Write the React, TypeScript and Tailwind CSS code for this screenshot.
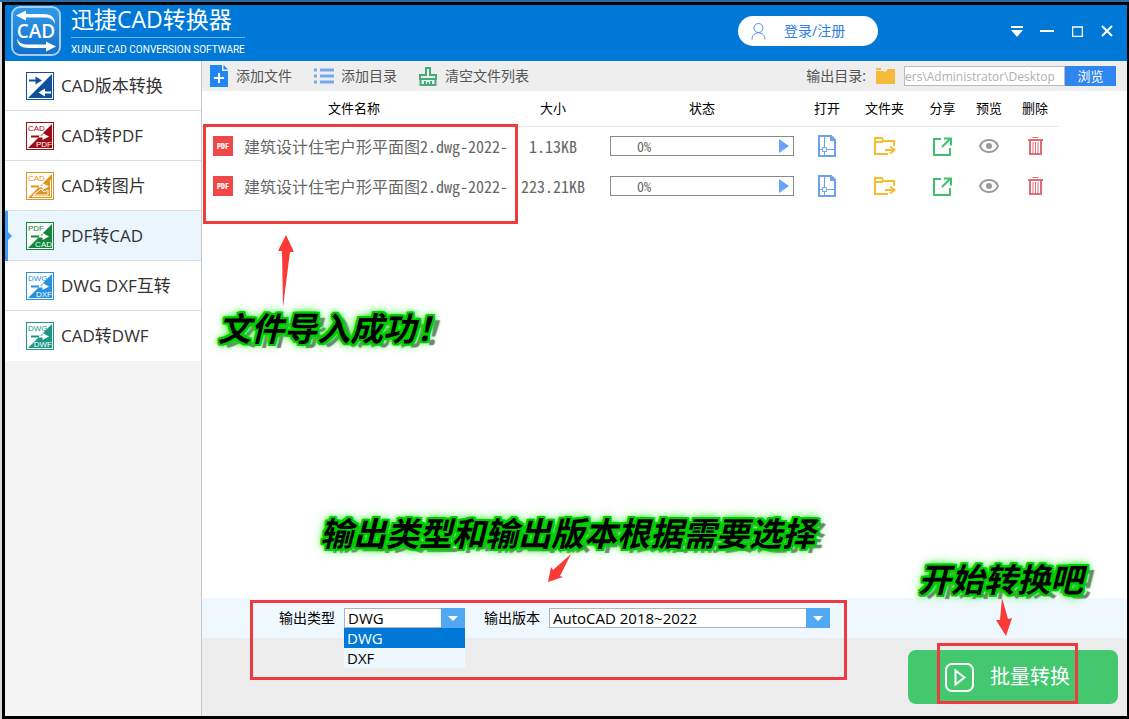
import { ReactNode } from "react";
import clsx from "clsx";

type Tool = {
  label: string;
  color: string;
  from?: string;
  to?: string;
  active?: boolean;
};

const tools: Tool[] = [
  { label: "CAD版本转换", color: "#10509a" },
  { label: "CAD转PDF", color: "#9c0c14", from: "CAD", to: "PDF" },
  { label: "CAD转图片", color: "#dd951f", from: "CAD" },
  { label: "PDF转CAD", color: "#12873a", from: "PDF", to: "CAD", active: true },
  { label: "DWG DXF互转", color: "#2a8fdc", from: "DWG", to: "DXF" },
  { label: "CAD转DWF", color: "#1d9688", from: "DWG", to: "DWF" },
];

const files = [
  { id: 1, name: "建筑设计住宅户形平面图2.dwg-2022-", size: "1.13KB", progress: 0 },
  { id: 2, name: "建筑设计住宅户形平面图2.dwg-2022-", size: "223.21KB", progress: 0 },
];

const columns = [
  { label: "文件名称", width: "w-[304px]" },
  { label: "大小", width: "w-[94px]" },
  { label: "状态", width: "w-[204px]" },
  { label: "打开", width: "w-[46px]" },
  { label: "文件夹", width: "w-[69px]" },
  { label: "分享", width: "w-[47px]" },
  { label: "预览", width: "w-[46px]" },
  { label: "删除", width: "w-[46px]" },
];

const Logo = () => (
  <svg width="50" height="50" viewBox="0 0 50 50" className="shrink-0">
    <defs>
      <linearGradient id="logo-bg" x1="0" y1="0" x2="0" y2="1">
        <stop offset="0" stopColor="#2f9bea" />
        <stop offset="1" stopColor="#1470cc" />
      </linearGradient>
    </defs>
    <rect x="1" y="1" width="48" height="48" rx="8" fill="url(#logo-bg)" stroke="#a9cdec" strokeWidth="2" />
    <path d="M5 9.500 15 4.500v3.500h17c8 0 12 3 12 10-2-5-5-6.500-12-6.500H15v3z" fill="#fff" />
    <path d="M45 40.500 35 45.500V42H18c-8 0-12-3-12-10 2 5 5 6.500 12 6.500h17v-3z" fill="#fff" />
    <text x="25" y="32" textAnchor="middle" fontSize="19" fontWeight="600" fill="#fff">
      CAD
    </text>
  </svg>
);

const ToolIcon = ({ color, from, to }: Tool) => (
  <svg width="28" height="28" viewBox="0 0 28 28" className="shrink-0" fontFamily="Liberation Sans">
    <rect x="0.5" y="0.5" width="27" height="27" fill="#fff" stroke={color} />
    <path d="M26 2v24H2z" fill={color} />
    {from ? (
      <>
        <text x="2" y="9" fontSize="8" fill={color}>
          {from}
        </text>
        <path d="M5 14.500h9" stroke={color} strokeWidth="2" />
        <path d="M13 14.500h6" stroke="#fff" strokeWidth="2" />
        <path d="M16.500 11v7l6.500-3.500z" fill="#fff" />
      </>
    ) : (
      <>
        <path d="M3 8.500h8" stroke={color} strokeWidth="2" />
        <path d="M9.500 4.500v8l6.500-4z" fill={color} />
        <path d="M17 20.500h8" stroke="#fff" strokeWidth="2" />
        <path d="M19 16.500v8l-6.500-4z" fill="#fff" />
      </>
    )}
    {to && (
      <text x="26" y="25" textAnchor="end" fontSize="8" fill="#fff">
        {to}
      </text>
    )}
    {from && !to && (
      <>
        <path d="M6 24.500h18.500V8" fill="none" stroke="#fff" />
        <path d="M7 23l8-6 3 3 4-2v5z" fill={color} stroke="#fff" />
      </>
    )}
  </svg>
);

const AddFileIcon = () => (
  <svg width="18" height="22" viewBox="0 0 18 22">
    <path d="M0 0h12v6h6v16H0z" fill="#1f86f5" />
    <path d="M13.500 0 18 4.500h-4.500z" fill="#1f86f5" />
    <path d="M9 8v10M4 13h10" stroke="#fff" strokeWidth="2" />
  </svg>
);

const ListIcon = () => (
  <svg width="20" height="16" viewBox="0 0 20 16" stroke="#74a9f0" strokeWidth="3">
    <path d="M0 2h3M0 8h3M0 14h3M6 2h14M6 8h14M6 14h14" />
  </svg>
);

const BroomIcon = () => (
  <svg width="18" height="19" viewBox="0 0 18 19" fill="none" stroke="#45ab78" strokeWidth="2">
    <path d="M7 8V1h4v7h6v4H1V8zM1.500 12v6h15v-6M6 14v4M9 15v3M12 14v4" />
  </svg>
);

const FolderIcon = () => (
  <svg width="19" height="16" viewBox="0 0 19 16" fill="#f6b93b">
    <path d="M0 3h7l2 1 3-3h7v15H0zM0 0h5v2H0z" />
  </svg>
);

const PdfIcon = () => (
  <svg width="20" height="20" viewBox="0 0 20 20" className="shrink-0">
    <rect width="20" height="20" fill="#f04848" />
    <text x="10" y="13" textAnchor="middle" fontSize="8" fontWeight="600" fill="#fff">
      PDF
    </text>
  </svg>
);

const OpenIcon = () => (
  <svg width="18" height="22" viewBox="0 0 18 22" fill="none" stroke="#6ba3ee">
    <path d="M1 1h12l4 4v16H1z" strokeWidth="2" />
    <path d="M12 0h1l5 5v1h-6z" fill="#6ba3ee" stroke="none" />
    <path d="M6.500 2v10M6.500 17v3M2 14.500h2M9 14.500h7M4.500 12.500h4v4h-4z" />
  </svg>
);

const MoveIcon = () => (
  <svg width="22" height="18" viewBox="0 0 22 18" fill="none" stroke="#f7bd2c" strokeWidth="2">
    <path d="M14 17H1V1h7l1 3h11v5M1 5h8M11 13h9M16 9.500l4.500 3.500-4.500 3.500" />
  </svg>
);

const ShareIcon = () => (
  <svg width="19" height="19" viewBox="0 0 19 19" fill="none" stroke="#3fc06c" strokeWidth="2">
    <path d="M8 2H1v16h16v-7M9 10l8.500-8.500M11 1.500h7v7" />
  </svg>
);

const EyeIcon = () => (
  <svg width="20" height="14" viewBox="0 0 20 14" fill="none" stroke="#999" strokeWidth="2">
    <path d="M1 7c3-8 15-8 18 0-3 8-15 8-18 0z" />
    <circle cx="10" cy="7" r="3" fill="#999" stroke="none" />
  </svg>
);

const TrashIcon = () => (
  <svg width="15" height="18" viewBox="0 0 15 18" fill="none" stroke="#de6f78">
    <path d="M0 3h15M2 3v14h11V3" strokeWidth="2" />
    <path d="M4.500 .5h6M5 5v11M7.500 5v11M10 5v11" />
  </svg>
);

const actions = [
  { label: "打开", icon: <OpenIcon /> },
  { label: "文件夹", icon: <MoveIcon /> },
  { label: "分享", icon: <ShareIcon /> },
  { label: "预览", icon: <EyeIcon /> },
  { label: "删除", icon: <TrashIcon /> },
];

const Callout = ({ className, children }: { className: string; children: ReactNode }) => (
  <p
    className={clsx(
      "pointer-events-none absolute z-20 whitespace-nowrap text-[33px] font-bold italic leading-10 text-black",
      "[text-shadow:2px_0_#0c0,-2px_0_#0c0,0_2px_#0c0,0_-2px_#0c0,2px_2px_#0c0,-2px_2px_#0c0,2px_-2px_#0c0,-2px_-2px_#0c0,0_0_5px_#0d0,0_0_8px_#0e0,0_0_12px_#3e3,7px_4px_1px_#777]",
      className
    )}
  >
    {children}
  </p>
);

const Marker = ({ className }: { className: string }) => (
  <div className={clsx("pointer-events-none absolute z-10 border-3 border-[#ec3c3f]", className)} />
);

const Header = () => (
  <header className="flex h-14 items-center bg-[#0078d7] pb-1 pl-1.5 pr-[5px] text-white">
    <Logo />
    <div className="ml-2.5 flex flex-col">
      <h1 className="border-b border-[#6db3ec] pb-1 text-[23px] leading-7">迅捷CAD转换器</h1>
      <span className="pt-1 font-['Roboto',sans-serif] text-[10px] leading-4">XUNJIE CAD CONVERSION SOFTWARE</span>
    </div>
    <button className="ml-auto mr-[124px] flex h-[30px] w-[140px] items-center gap-4 rounded-full bg-white pl-[13px] text-sm text-[#2f7de6]">
      <svg width="15" height="17" viewBox="0 0 15 17" fill="none" stroke="#4a8cf0">
        <circle cx="7.500" cy="5" r="4.500" />
        <path d="M1 16.500c0-9 13-9 13 0" />
      </svg>
      <span className="pl-0.5">登录/注册</span>
    </button>
    <div className="flex">
      <button aria-label="菜单" className="flex h-8 w-[30px] items-center justify-center">
        <svg width="12" height="11" viewBox="0 0 12 11" fill="#fff">
          <path d="M0 0h12v2H0zM0 4h12l-6 7z" />
        </svg>
      </button>
      <button aria-label="最小化" className="flex h-8 w-[30px] items-center justify-center">
        <svg width="14" height="2" viewBox="0 0 14 2" fill="#fff">
          <path d="M0 0h14v2H0z" />
        </svg>
      </button>
      <button aria-label="最大化" className="flex h-8 w-[30px] items-center justify-center">
        <svg width="11" height="11" viewBox="0 0 11 11" fill="none" stroke="#fff">
          <path d="M.5 1h10v9.500H.5z" strokeWidth="1.500" />
        </svg>
      </button>
      <button aria-label="关闭" className="flex h-8 w-[30px] items-center justify-center">
        <svg width="12" height="12" viewBox="0 0 12 12" stroke="#fff" strokeWidth="2">
          <path d="M1 1l10 10M11 1L1 11" />
        </svg>
      </button>
    </div>
  </header>
);

const Sidebar = () => (
  <nav className="w-[197px] shrink-0 border-r border-[#c3c9d0] bg-[#f4f4f4]">
    {tools.map((tool) => (
      <a
        key={tool.label}
        href="#"
        className={clsx(
          "relative flex h-[50px] items-center gap-[7px] border-b border-[#dcdfe3] pl-[21px] text-[17px] text-[#333] last:border-white",
          tool.active ? "bg-[#eaf5fe]" : "bg-white"
        )}
      >
        {tool.active && (
          <svg width="7" height="50" viewBox="0 0 7 50" fill="#3d9df6" className="absolute left-0 top-0">
            <path d="M0 0h3v21l4 4-4 4v21H0z" />
          </svg>
        )}
        <ToolIcon {...tool} />
        <span>{tool.label}</span>
      </a>
    ))}
  </nav>
);

const Toolbar = () => (
  <div className="flex h-[30px] items-center bg-[#eee] pl-2 pr-[11px] text-sm text-[#555]">
    <button className="flex items-center gap-2">
      <AddFileIcon />
      添加文件
    </button>
    <button className="ml-[22px] flex items-center gap-[7px]">
      <ListIcon />
      添加目录
    </button>
    <button className="ml-[22px] flex items-center gap-2">
      <BroomIcon />
      清空文件列表
    </button>
    <label htmlFor="output-dir" className="ml-auto mr-2.5">
      输出目录:
    </label>
    <FolderIcon />
    <input
      id="output-dir"
      readOnly
      value="ers\Administrator\Desktop"
      className="ml-[9px] h-5 w-[161px] border border-[#bbb] bg-white text-xs text-[#b0b0b0] outline-none"
    />
    <button className="h-5 w-[51px] bg-[#2f86f0] text-[13px] leading-5 text-white">浏览</button>
  </div>
);

const FileTable = () => (
  <table className="w-[856px] table-fixed border-collapse">
    <thead>
      <tr className="h-[35px] border-b border-[#e6e6e6]">
        {columns.map((column) => (
          <th key={column.label} className={clsx("p-0 text-[13px] font-normal text-black", column.width)}>
            {column.label}
          </th>
        ))}
      </tr>
    </thead>
    {/* half-width latin keeps names and sizes in fixed columns */}
    <tbody className="font-['Noto_Sans_CJK_SC',sans-serif] [font-feature-settings:'hwid']">
      {files.map((file) => (
        <tr key={file.id} className="h-10 text-[#666]">
          <td className="p-0">
            <div className="flex items-center gap-[11px] whitespace-nowrap pl-[11px]">
              <PdfIcon />
              <span className="text-base">{file.name}</span>
            </div>
          </td>
          <td className="p-0 text-center text-base">{file.size}</td>
          <td className="p-0">
            <div className="mx-auto flex h-5 w-[184px] items-center justify-between border border-[#8a8a8a] pl-[26px] pr-1 text-sm">
              {file.progress}%
              <svg width="10" height="14" viewBox="0 0 10 14" fill="#68a4f6">
                <path d="M0 0v14l10-7z" />
              </svg>
            </div>
          </td>
          {actions.map((action) => (
            <td key={action.label} className="p-0">
              <button aria-label={action.label} className="mx-auto flex">
                {action.icon}
              </button>
            </td>
          ))}
        </tr>
      ))}
    </tbody>
  </table>
);

const DropArrow = () => (
  <span className="pointer-events-none absolute right-0 top-0 flex h-5 w-6 items-center justify-center bg-[#51a9f4]">
    <svg width="10" height="5" viewBox="0 0 10 5" fill="#fff">
      <path d="M0 0h10L5 5z" />
    </svg>
  </span>
);

const OutputOptions = () => (
  <form className="relative flex h-10 items-center bg-[#f0f8ff] pl-[77px] text-sm text-black">
    <label htmlFor="output-type" className="mr-[9px]">
      输出类型
    </label>
    <div className="relative mr-[19px] h-5 w-[121px]">
      <select
        id="output-type"
        defaultValue="DWG"
        className="block h-5 w-full appearance-none border border-[#a8b4c0] bg-white pl-[3px] text-[15px] leading-4 outline-none"
      >
        <option>DWG</option>
        <option>DXF</option>
      </select>
      <DropArrow />
      <ul
        role="listbox"
        aria-label="输出类型"
        className="absolute left-0 top-full z-10 w-full bg-[#f0f8ff] text-[15px] leading-5"
      >
        <li role="option" aria-selected="true" className="bg-[#0078d7] pl-[3px] text-white">
          DWG
        </li>
        <li role="option" aria-selected="false" className="pl-[3px]">
          DXF
        </li>
      </ul>
    </div>
    <label htmlFor="output-version" className="mr-[9px]">
      输出版本
    </label>
    <div className="relative h-5 w-[281px]">
      <select
        id="output-version"
        className="block h-5 w-full appearance-none border border-[#a8b4c0] bg-white pl-[3px] text-[15px] leading-4 outline-none"
      >
        <option>AutoCAD 2018~2022</option>
      </select>
      <DropArrow />
    </div>

    <Marker className="left-12 top-0.5 h-20 w-[597px]" />
    <Callout className="bottom-[84px] left-[118px]">输出类型和输出版本根据需要选择</Callout>
    <svg width="24" height="28" viewBox="0 0 24 28" fill="#fb3a37" className="absolute bottom-14 left-[345px] z-20">
      <path d="M24 0 13 22l3 1L1 28 4 13l2 3z" />
    </svg>
    <Callout className="bottom-[38px] right-11">开始转换吧</Callout>
    <svg width="16" height="39" viewBox="0 0 16 39" fill="#fb3a37" className="absolute right-[115px] top-0 z-20">
      <path d="M6 0l6 21 4-1-6 18-10-16 4 0z" />
    </svg>
  </form>
);

const App = () => {
  return (
    <div className="flex min-h-screen flex-col bg-[#2c6ca4] pt-0.5 font-['Open_Sans','Noto_Sans_CJK_SC',sans-serif]">
      <div className="flex flex-1 flex-col border-l-2 border-[#d5dbe0]">
        <div className="flex flex-1 flex-col border-3 border-r-2 border-black">
          <Header />
          <div className="flex flex-1">
            <Sidebar />
            <main className="flex min-w-0 flex-1 flex-col bg-white">
              <Toolbar />
              <section className="relative flex-1">
                <FileTable />
                <Marker className="left-px top-[33px] h-[100px] w-[315px]" />
                <svg width="18" height="72" viewBox="0 0 18 72" fill="#fb3a37" className="absolute left-[75px] top-36 z-20">
                  <path d="M9 0l8 17h-4L6 72 5 16H1z" />
                </svg>
                <Callout className="left-4 top-[218px]">文件导入成功！</Callout>
              </section>
              <OutputOptions />
              <div className="flex justify-end bg-[#ededed] px-[9px] py-3">
                <div className="relative">
                  <button className="flex h-[54px] w-[210px] items-center gap-4 rounded-lg bg-[#43c76f] pl-[37px] text-xl text-white">
                    <svg width="29" height="29" viewBox="0 0 29 29" fill="none" stroke="#fff" strokeWidth="2">
                      <rect x="1" y="1" width="27" height="27" rx="6" />
                      <path d="M10.500 7.500v14l9-7z" />
                    </svg>
                    批量转换
                  </button>
                  <Marker className="-top-[7px] left-[29px] h-[61px] w-[141px]" />
                </div>
              </div>
            </main>
          </div>
        </div>
      </div>
    </div>
  );
};

export default App;
